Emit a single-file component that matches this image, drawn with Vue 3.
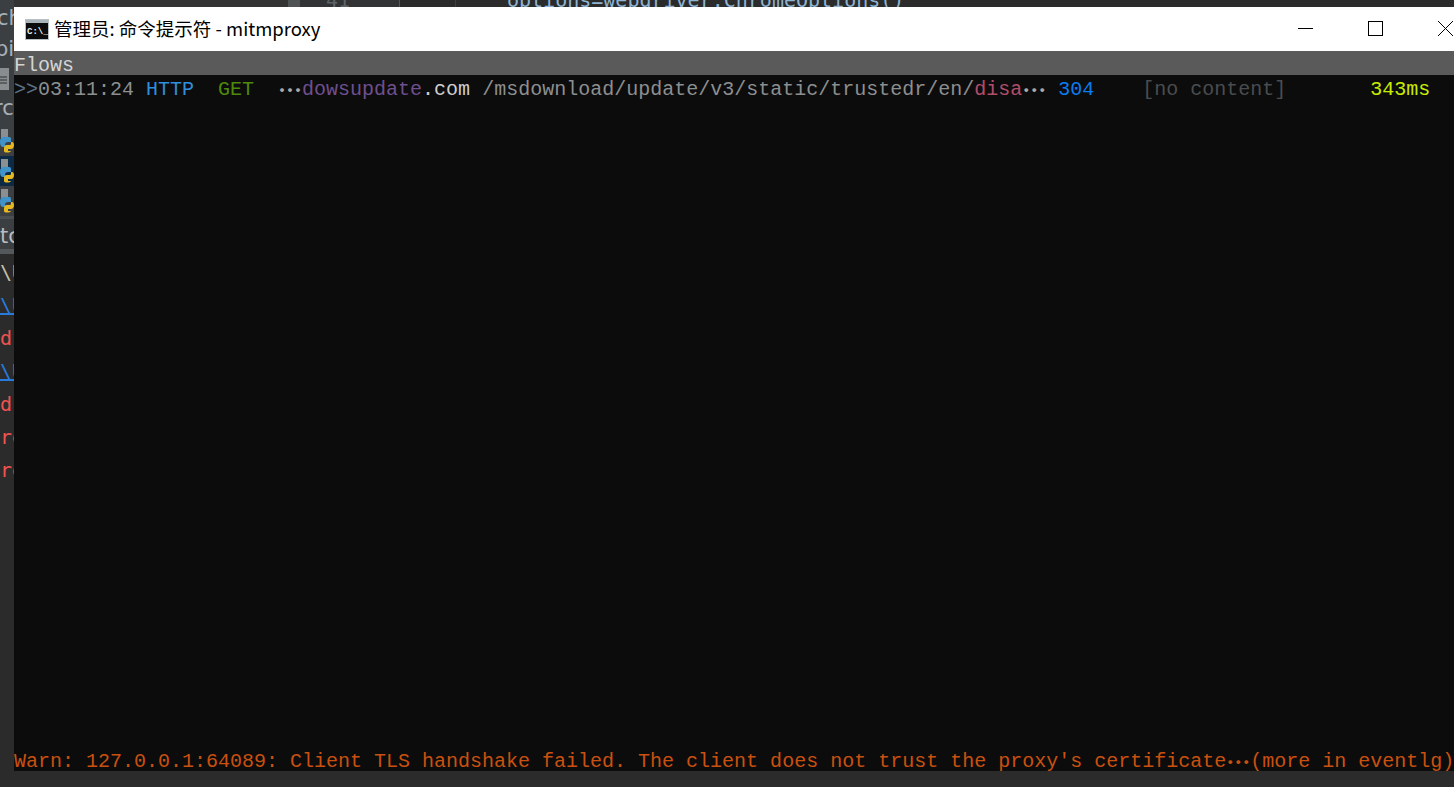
<script setup>
const links = [
  { t: '\\U', c: 'pale' },
  { t: '\\U', c: 'link' },
  { t: 'dr', c: 'err' },
  { t: '\\U', c: 'link' },
  { t: 'dr', c: 'err' },
  { t: 're', c: 'err' },
  { t: 're', c: 'err' }
]
const pyRows = [{ sel: false }, { sel: true }, { sel: false }]
const cells = [
  { t: '>>', c: 'arrow' },
  { t: '03:11:24 ', c: 'time' },
  { t: 'HTTP  ', c: 'scheme' },
  { t: 'GET  ', c: 'method' },
  { t: '…', c: 'ell' },
  { t: 'dowsupdate', c: 'host' },
  { t: '.com ', c: 'tld' },
  { t: '/msdownload/update/v3/static/trustedr/en/', c: 'path' },
  { t: 'disa', c: 'pathend' },
  { t: '…', c: 'ell' },
  { t: ' ', c: 'gap' },
  { t: '304', c: 'code' },
  { t: '    ', c: 'gap' },
  { t: '[no content]', c: 'size' },
  { t: '       ', c: 'gap' },
  { t: '343ms', c: 'dur' }
]
</script>

<template>
  <div class="desk">
    <aside class="ide-left">
      <div class="side-text first">ch</div>
      <div class="side-text cut">pir</div>
      <div class="file-row">
        <svg width="9" height="24" viewBox="0 0 9 24">
          <rect x="0" y="1" width="9" height="22" fill="#8a8d8f" />
          <path d="M0 10h7M0 13h7M0 16h7" stroke="#4d5052" stroke-width="1.4" />
        </svg>
      </div>
      <div class="side-text rc">rc</div>
      <div v-for="(p, i) in pyRows" :key="i" class="py-row" :class="{ sel: p.sel }">
        <svg width="14" height="26" viewBox="0 0 14 26">
          <rect x="1" y="1" width="7" height="9" fill="#8b8f92" />
          <path d="M7 9H4C1 9 0 11 0 14s1 5 3 5h2v-2c0-2 1-3 3-3h3v-3c0-2-1-2-4-2z" fill="#3f93c8" />
          <path d="M11 14h1c1 0 2 1 2 3s-1 4-3 4H8v2h3c-1 2-7 2-7 0v-3c0-2 1-3 3-3h3c1 0 1-1 1-3z" fill="#e4b81e" />
        </svg>
      </div>
      <div class="side-rule"></div>
      <div class="side-text tc">tc</div>
      <div class="side-bar"></div>
      <div class="run-log">
        <div v-for="(l, i) in links" :key="i" class="log-row" :class="l.c">{{ l.t }}</div>
      </div>
    </aside>

    <div class="main-col">
      <div class="ide-top">
        <div class="top-pad"></div>
        <div class="top-tile"></div>
        <div class="top-gutter">41</div>
        <div class="top-fold"></div>
        <div class="top-code">options=webdriver.ChromeOptions()</div>
      </div>

      <section class="win">
        <header class="caption">
          <svg class="cmd" width="24" height="21" viewBox="0 0 24 21">
            <rect x="0.5" y="0.5" width="23" height="20" fill="#0c0c0c" stroke="#b9c0c4" />
            <rect x="1" y="1" width="22" height="3" fill="#aab4b9" />
            <text x="2" y="15" class="cmd-text">C:\_</text>
          </svg>
          <span class="title">管理员: 命令提示符 - mitmproxy</span>
          <div class="controls">
            <svg width="15" height="15" viewBox="0 0 15 15"><path d="M0 7.5h15" stroke="#000" /></svg>
            <svg width="15" height="15" viewBox="0 0 15 15"><rect x="0.5" y="0.5" width="14" height="14" fill="none" stroke="#000" /></svg>
            <svg width="15" height="15" viewBox="0 0 15 15"><path d="M0 0l15 15M15 0L0 15" stroke="#000" /></svg>
          </div>
        </header>

        <div class="term">
          <div class="head">Flows</div>
          <div class="flows">
            <div class="row"><span v-for="(cell, i) in cells" :key="i" :class="cell.c">{{ cell.t }}</span></div>
          </div>
          <div class="status">Warn: 127.0.0.1:64089: Client TLS handshake failed. The client does not trust the proxy's certificate<span class="ell warn-ell">…</span>(more in eventlg)</div>
        </div>
      </section>

      <div class="ide-bottom"></div>
    </div>
  </div>
</template>

<style>
html, body { margin: 0; background: #2b2b2b; overflow: hidden; }
</style>

<style scoped>
.desk {
  width: 1454px;
  height: 787px;
  display: flex;
  overflow: hidden;
  background: #2b2b2b;
}

/* IDE fragment on the left */
.ide-left {
  width: 14px;
  flex: none;
  display: flex;
  flex-direction: column;
  overflow: hidden;
  background: #2b2b2b;
  font-family: "DejaVu Sans", sans-serif;
  font-size: 21px;
}
.side-text {
  background: #3c3f41;
  color: #a7b0b8;
  white-space: nowrap;
  height: 30px;
  line-height: 30px;
}
.first { height: 33px; padding-top: 3px; line-height: 30px; }
.first { text-indent: -3px; }
.cut { text-indent: -5px; line-height: 26px; }
.file-row { background: #3c3f41; height: 27px; padding-top: 1px; box-sizing: border-box; }
.rc { text-indent: -6px; height: 33px; line-height: 30px; }
.py-row {
  background: #3c3f41;
  height: 30px;
  display: flex;
  align-items: center;
  box-sizing: border-box;
}
.py-row.sel { background: #0d2a44; }
.side-rule { height: 3px; background: #4c4f51; }
.tc { background: #3c3f41; color: #b8bcc0; height: 30px; line-height: 34px; }
.side-bar { height: 5px; background: #55585a; }
.run-log { display: flex; flex-direction: column; }
.log-row {
  height: 33px;
  line-height: 37px;
  white-space: nowrap;
  font-family: "DejaVu Sans Mono", monospace;
  font-size: 20px;
}
.pale { color: #c8c0a8; }
.link { color: #287bde; text-decoration: underline; }
.err { color: #f0524f; }

/* right part */
.main-col { flex: 1; min-width: 0; display: flex; flex-direction: column; }

.ide-top {
  height: 7px;
  flex: none;
  display: flex;
  overflow: hidden;
  background: #2b2b2b;
  font-family: "DejaVu Sans Mono", monospace;
  font-size: 20px;
  line-height: 0;
}
.top-pad { width: 274px; flex: none; background: #333; }
.top-tile { width: 12px; flex: none; background: #505354; }
.top-gutter { width: 100px; flex: none; box-sizing: border-box; padding-left: 26px; color: #606366; background: #313335; border-right: 1px solid #555; }
.top-fold { width: 55px; flex: none; border-right: 1px solid #3f3f3f; }
.top-code { padding-left: 51px; color: #8fb4d2; white-space: nowrap; }

.win { flex: 1; min-height: 0; display: flex; flex-direction: column; }

.caption {
  height: 44px;
  flex: none;
  background: #fff;
  display: flex;
  align-items: center;
  padding-left: 11px;
  padding-right: 1px;
}
.cmd { flex: none; margin-right: 5px; }
.cmd-text {
  font-family: "Liberation Mono", monospace;
  font-size: 9px;
  font-weight: 700;
  fill: #f0f0f0;
}
.title {
  font-family: "Noto Sans CJK SC", "Noto Sans", sans-serif;
  font-size: 18.5px;
  line-height: 40px;
  margin-bottom: 3px;
  color: #000;
  white-space: nowrap;
}
.controls {
  margin-left: auto;
  display: flex;
  gap: 55px;
  margin-bottom: 2px;
}

.term {
  flex: 1;
  min-height: 0;
  display: flex;
  flex-direction: column;
  background: #0c0c0c;
  font-family: "Liberation Mono", monospace;
  font-size: 20px;
  line-height: 30px;
  white-space: pre;
}
.head { height: 24px; background: #5a5a5a; color: #d4d4d4; }
.flows { flex: 1; min-height: 0; }
.row { height: 24px; color: #8a8a8a; }
.arrow { color: #5d7286; }
.time { color: #8c9090; }
.scheme { color: #2f8fdc; }
.method { color: #4e8a0a; }
.host { color: #6f4f8e; }
.tld { color: #cfcfcf; }
.path { color: #8c8f8f; }
.pathend { color: #b14c6a; }
.code { color: #0a7cf0; }
.size { color: #4a4d4f; }
.dur { color: #c8ec00; }
.ell {
  display: inline-block;
  width: 24px;
  font-family: "Noto Sans CJK SC", sans-serif;
  font-size: 24px;
  font-weight: 700;
  line-height: 28px;
  color: #a8a8a8;
  vertical-align: top;
}
.status { height: 24px; color: #ca5010; }
.warn-ell { color: #ca5010; }

.ide-bottom { height: 16px; flex: none; background: #2b2b2b; }
</style>
